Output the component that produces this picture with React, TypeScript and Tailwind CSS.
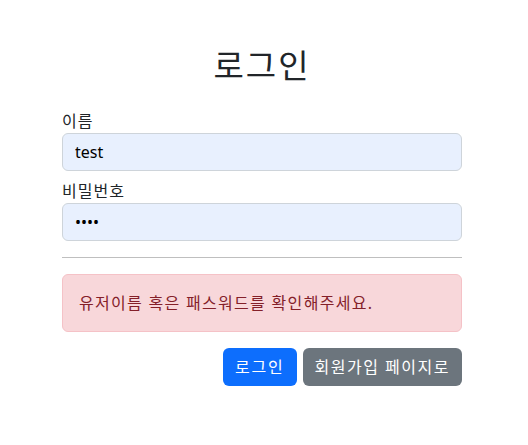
export default function App() {
  return (
    <div
      className="min-h-screen bg-white pr-[4px] text-[#212529]"
      style={{ fontFamily: '"Noto Sans", "Noto Sans CJK KR", sans-serif' }}
    >
      <div className="mx-auto w-[400px] pt-[42px]">
        <h1 className="mb-[19px] text-center text-[33px] leading-[48px] font-normal tracking-[2px]">로그인</h1>
        <form onSubmit={(e) => e.preventDefault()}>
          <label className="block text-[16px] leading-[24px] tracking-[1px]">이름</label>
          <input
            defaultValue="test"
            className="mb-[8px] block h-[38px] w-full rounded-[6px] border border-[#ced4da] bg-[#e8f0fe] px-[12px] text-[16px] text-black outline-none"
          />
          <label className="block text-[16px] leading-[24px] tracking-[1px]">비밀번호</label>
          <input
            type="password"
            defaultValue="test"
            className="block h-[38px] w-full rounded-[6px] border border-[#ced4da] bg-[#e8f0fe] px-[12px] text-[16px] text-black outline-none"
          />
          <hr className="my-[16px] border-t border-[#bfbfbf]" />
          <div className="mb-[16px] rounded-[6px] border border-[#f5c2c7] bg-[#f8d7da] p-[16px] text-[16px] leading-[24px] tracking-[1.3px] text-[#842029]">
            유저이름 혹은 패스워드를 확인해주세요.
          </div>
          <div className="flex justify-end gap-[6px]">
            <button className="h-[38px] rounded-[6px] bg-[#0d6efd] px-[12px] text-[16px] tracking-[1.8px] text-white">로그인</button>
            <button className="h-[38px] rounded-[6px] bg-[#6c757d] px-[12px] text-[16px] tracking-[1.5px] text-white">회원가입 페이지로</button>
          </div>
        </form>
      </div>
    </div>
  );
}
